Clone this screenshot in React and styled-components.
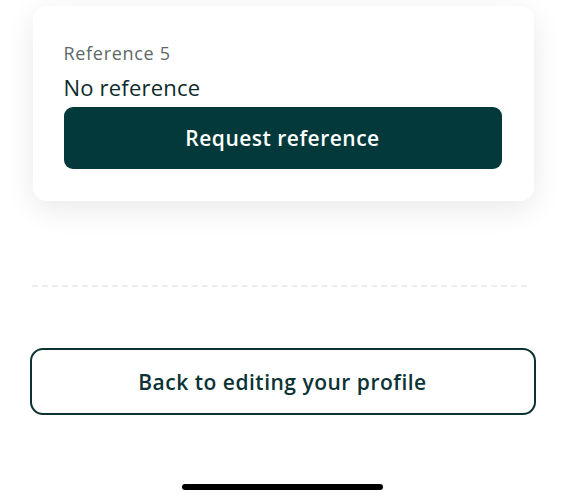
import styled, { createGlobalStyle } from "styled-components";

const GlobalStyle = createGlobalStyle`
  body {
    margin: 0;
    background: #ffffff;
    font-family: "Open Sans", "Liberation Sans", sans-serif;
  }
`;

const Page = styled.div`
  width: 565px;
  height: 500px;
  display: flex;
  flex-direction: column;
  align-items: center;
  padding-top: 6px;
  box-sizing: border-box;
  overflow: hidden;
`;

const Card = styled.div`
  width: 501px;
  box-sizing: border-box;
  margin-left: 1px;
  padding: 36px 32px 32px 31px;
  background: #fff;
  border-radius: 14px;
  box-shadow: 0 8px 30px rgba(0, 0, 0, 0.09);
  display: flex;
  flex-direction: column;
`;

const Label = styled.div`
  font-size: 18px;
  line-height: 23px;
  color: #5d6867;
  letter-spacing: 0.7px;
`;

const Value = styled.div`
  margin-top: 9px;
  font-size: 22px;
  line-height: 27px;
  color: #0b2b2c;
  letter-spacing: 0.2px;
`;

const Button = styled.button`
  font-family: inherit;
  width: 100%;
  box-sizing: border-box;
  height: ${(p) => p.$height}px;
  border-radius: ${(p) => p.$radius}px;
  font-size: 21px;
  font-weight: 600;
  letter-spacing: 0.5px;
  cursor: pointer;
  background: ${(p) => (p.$outline ? "#fff" : "#03393a")};
  color: ${(p) => (p.$outline ? "#0b3335" : "#fff")};
  border: ${(p) => (p.$outline ? "2px solid #0d3233" : "none")};
`;

const PrimaryWrap = styled.div`
  margin-top: 6px;
`;

const Divider = styled.div`
  width: 495px;
  margin: 84px 0 0 -6px;
  border-top: 2px dashed #ededed;
`;

const BackWrap = styled.div`
  width: 506px;
  margin-top: 61px;
`;

const HomeIndicator = styled.div`
  width: 201px;
  height: 6px;
  border-radius: 3px;
  background: #000;
  margin-top: 69px;
`;

export default function App() {
  return (
    <>
      <GlobalStyle />
      <Page>
        <Card>
          <Label>Reference 5</Label>
          <Value>No reference</Value>
          <PrimaryWrap>
            <Button $height={62} $radius={9}>
              Request reference
            </Button>
          </PrimaryWrap>
        </Card>
        <Divider />
        <BackWrap>
          <Button $outline $height={67} $radius={13}>
            Back to editing your profile
          </Button>
        </BackWrap>
        <HomeIndicator />
      </Page>
    </>
  );
}
